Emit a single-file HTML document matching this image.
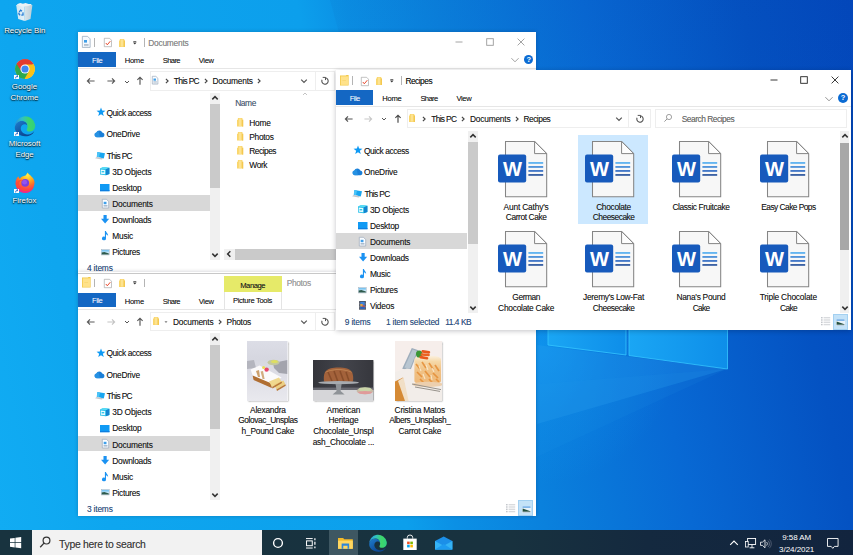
<!DOCTYPE html><html><head><meta charset="utf-8"><title>Desktop</title><style>
*{box-sizing:border-box;margin:0;padding:0}
html,body{width:853px;height:555px;overflow:hidden}
body{position:relative;font-family:"Liberation Sans",sans-serif;font-size:8.4px;color:#1a1a1a;background:#0a84dc}
.a{position:absolute}
.t{position:absolute;white-space:nowrap;line-height:10px;text-shadow:0 0 .6px rgba(20,20,20,.4)}
.c{text-align:center}
.win{position:absolute;overflow:hidden;background:#fff}
.in{position:absolute}
.sh{position:absolute;box-shadow:0 1px 5px 0 rgba(0,0,20,.24)}
.file{position:absolute;background:#1568c3;color:#fff;text-align:center;line-height:15px}
.st{color:#2b5289}
.g{color:#8c8c8c}
.box{position:absolute;border:1px solid #eeeeee;background:#fff}
.dl{color:#fff;text-shadow:0 .7px 1.2px rgba(0,0,0,.95),0 0 2px rgba(0,0,0,.55);font-size:7.8px;line-height:10.9px;text-align:center;position:absolute;width:70px}
.lab{position:absolute;text-align:center;line-height:10.7px;font-size:8.4px;letter-spacing:-.22px;text-shadow:0 0 .6px rgba(20,20,20,.4)}
svg{position:absolute;overflow:visible}
</style></head><body><svg style="left:0px;top:0px" width="853" height="555" viewBox="0 0 853 555"><defs><linearGradient id="bgg" gradientUnits="userSpaceOnUse" x1="-107.6" y1="22.7" x2="831.3" y2="-175.1"><stop offset="0.0000" stop-color="#11acf3"/><stop offset="0.1146" stop-color="#0ea6ef"/><stop offset="0.4167" stop-color="#0c9fec"/><stop offset="0.4667" stop-color="#0b90e5"/><stop offset="0.5573" stop-color="#0a81dd"/><stop offset="0.7083" stop-color="#0869d4"/><stop offset="0.8698" stop-color="#0452c2"/><stop offset="1.0000" stop-color="#0347bc"/></linearGradient><linearGradient id="pane" x1="0" y1="0" x2="1" y2="0"><stop offset="0" stop-color="#1aa6f4"/><stop offset="1" stop-color="#0e8ee9"/></linearGradient></defs><rect x="0" y="0" width="853" height="555" fill="url(#bgg)"/><defs><linearGradient id="dk" x1="0" y1="0" x2="0" y2="1"><stop offset="0" stop-color="#001a70" stop-opacity=".04"/><stop offset="1" stop-color="#001a70" stop-opacity="0"/></linearGradient></defs><polygon points="330,0 853,0 853,330 420,330" fill="url(#dk)"/><defs><radialGradient id="glow" gradientUnits="userSpaceOnUse" cx="540" cy="345" r="140"><stop offset="0" stop-color="#12a4fa" stop-opacity=".55"/><stop offset=".5" stop-color="#12a4fa" stop-opacity=".2"/><stop offset="1" stop-color="#12a4fa" stop-opacity="0"/></radialGradient></defs><rect x="380" y="200" width="320" height="300" fill="url(#glow)"/><polygon points="727,369 537,345 537,424" fill="#2aa0f0" opacity=".28"/><polygon points="727,369 400,395 400,520" fill="#2aa0f0" opacity=".10"/><polygon points="548,320 626,320 626,355 548,345" fill="url(#pane)" stroke="#35c6ff" stroke-width=".8"/><polygon points="629,320 727.5,320 727.5,369 629,355.5" fill="url(#pane)" stroke="#35c6ff" stroke-width=".8"/></svg>
<div class="a" style="left:78px;top:32.4px;width:458.4px;height:242.6px;box-shadow:0 0 4px rgba(0,0,30,.22)"></div>
<div class="win" style="left:78px;top:32.4px;width:458.4px;height:242.6px"><div class="in" style="left:-78px;top:-32.4px;width:853px;height:555px">
<svg style="left:82px;top:36.2px" width="8.5" height="11.8" viewBox="0 0 8.5 11.8"><path d="M.35 .35 H5.6 L8.15 2.9 V11.45 H.35Z" fill="#f4f9fe" stroke="#8fa3b8" stroke-width=".7"/><rect x="2" y="4" width="3" height="2.6" fill="#3f9fe8"/><rect x="2" y="8" width="4.6" height=".7" fill="#9ab"/><rect x="2" y="9.4" width="4.6" height=".7" fill="#9ab"/></svg>
<div class="a" style="left:94.3px;top:38.25px;width:0.8px;height:8.5px;background:#b4b4b4;"></div>
<svg style="left:103.6px;top:38.2px" width="7.8" height="9" viewBox="0 0 7.8 9"><path d="M.3 .3 H5.6 L7.5 2.2 V8.7 H.3Z" fill="#fff" stroke="#9a9a9a" stroke-width=".6"/><path d="M1.8 5 L3.3 6.8 L6.3 3.2" fill="none" stroke="#e8482c" stroke-width="1"/></svg>
<svg style="left:118.8px;top:38.6px" width="6" height="8" viewBox="0 0 6 8"><path d="M0.8400000000000001 0 H5.28 V1.6 H6 V8 H0 V1.6 H0.8400000000000001Z" fill="#fad66c"/><path d="M1.7999999999999998 0.48 H4.199999999999999 V7.52 H1.7999999999999998Z" fill="#fde79d" opacity=".75"/><path d="M4.800000000000001 1.6 H6 V8 H4.800000000000001Z" fill="#f3c44a" opacity=".8"/></svg>
<svg style="left:133.2px;top:40.6px" width="3.6" height="3.6" viewBox="0 0 3.6 3.6"><rect x=".3" y="0" width="3" height=".7" fill="#333"/><polygon points="0,1.4 3.6,1.4 1.8,3.4" fill="#333"/></svg>
<div class="a" style="left:144.0px;top:38.25px;width:0.8px;height:8.5px;background:#b4b4b4;"></div>
<div class="t g" style="left:148.2px;top:37.6px;letter-spacing:-0.221px;">Documents</div>
<svg style="left:459.2px;top:42px" width="1" height="1" viewBox="0 0 1 1"><path d="M-3.5 0 H3.5" stroke="#9a9a9a" stroke-width=".9"/></svg>
<svg style="left:489.5px;top:42px" width="1" height="1" viewBox="0 0 1 1"><rect x="-3.3" y="-3.3" width="6.6" height="6.6" fill="none" stroke="#9a9a9a" stroke-width=".9"/></svg>
<svg style="left:520.6px;top:42px" width="1" height="1" viewBox="0 0 1 1"><path d="M-3.4 -3.4 L3.4 3.4 M3.4 -3.4 L-3.4 3.4" stroke="#9a9a9a" stroke-width=".9"/></svg>
<svg style="left:514.5px;top:60.3px" width="1" height="1" viewBox="0 0 1 1"><path d="M-3.6 -1.8 L0 1.8 L3.6 -1.8" fill="none" stroke="#8a8a8a" stroke-width="0.8"/></svg>
<div class="a" style="left:524.3px;top:55.199999999999996px;width:9.2px;height:9.2px;border-radius:5px;background:#0b6bd3;color:#fff;font-size:7.5px;font-weight:bold;line-height:9.4px;text-align:center">?</div>
<div class="a" style="left:78px;top:52px;width:37.7px;height:14.8px;background:#1467c3;"></div>
<div class="t " style="left:92.1px;top:55.7px;font-size:7.6px;letter-spacing:-0.562px;color:#fff;text-shadow:none">File</div>
<div class="t " style="left:124.7px;top:55.9px;font-size:7.6px;letter-spacing:-0.268px;">Home</div>
<div class="t " style="left:162.8px;top:55.9px;font-size:7.6px;letter-spacing:-0.616px;">Share</div>
<div class="t " style="left:198.8px;top:55.9px;font-size:7.6px;letter-spacing:-0.359px;">View</div>
<div class="a" style="left:78px;top:68.3px;width:460px;height:0.9px;background:#e6e6e6;"></div>
<svg style="left:91.3px;top:81.2px" width="1" height="1" viewBox="0 0 1 1"><path d="M3.6 0 H-3.6 M-1.0 -2.6 L-3.6 0 L-1.0 2.6" fill="none" stroke="#5a5a5a" stroke-width="1.15"/></svg>
<svg style="left:110.8px;top:81.2px" width="1" height="1" viewBox="0 0 1 1"><path d="M-3.6 0 H3.6 M1.0 -2.6 L3.6 0 L1.0 2.6" fill="none" stroke="#5a5a5a" stroke-width="1.15"/></svg>
<svg style="left:127px;top:81.6px" width="1" height="1" viewBox="0 0 1 1"><path d="M-2 -1.0 L0 1.0 L2 -1.0" fill="none" stroke="#555" stroke-width="1"/></svg>
<svg style="left:140.3px;top:81px" width="1" height="1" viewBox="0 0 1 1"><path d="M0 3.8 V-3.8 M-2.6 -1.1999999999999997 L0 -3.8 L2.6 -1.1999999999999997" fill="none" stroke="#555" stroke-width="1.15"/></svg>
<div class="box" style="left:149.6px;top:71px;width:166px;height:19.8px"></div>
<div class="box" style="left:314.8px;top:71px;width:20px;height:19.8px"></div>
<svg style="left:152.4px;top:76.4px" width="6.2" height="8.4" viewBox="0 0 6.2 8.4"><path d="M.3 .3 H3.844 L5.9 2.2680000000000002 V8.1 H.3Z" fill="#fbfdff" stroke="#93a3b6" stroke-width=".65"/><rect x="1.488" y="2.52" width="2.4800000000000004" height="2.184" fill="#3f9fe9"/><rect x="1.364" y="5.5440000000000005" width="3.4720000000000004" height=".7" fill="#8aa0b8"/><rect x="1.364" y="6.720000000000001" width="3.4720000000000004" height=".6" fill="#a9b8c8"/></svg>
<svg style="left:166.5px;top:81.3px" width="1" height="1" viewBox="0 0 1 1"><path d="M-1.1 -2.2 L1.1 0 L-1.1 2.2" fill="none" stroke="#444" stroke-width="1.15"/></svg>
<div class="t " style="left:173.8px;top:75.9px;letter-spacing:-0.653px;">This PC</div>
<svg style="left:206px;top:81.3px" width="1" height="1" viewBox="0 0 1 1"><path d="M-1.1 -2.2 L1.1 0 L-1.1 2.2" fill="none" stroke="#444" stroke-width="1.15"/></svg>
<div class="t " style="left:212.4px;top:75.9px;letter-spacing:-0.221px;">Documents</div>
<svg style="left:259.2px;top:81.3px" width="1" height="1" viewBox="0 0 1 1"><path d="M-1.1 -2.2 L1.1 0 L-1.1 2.2" fill="none" stroke="#444" stroke-width="1.15"/></svg>
<svg style="left:304.2px;top:81.3px" width="1" height="1" viewBox="0 0 1 1"><path d="M-2.8 -1.4 L0 1.4 L2.8 -1.4" fill="none" stroke="#555" stroke-width="1.2"/></svg>
<svg style="left:324.8px;top:81px" width="1" height="1" viewBox="0 0 1 1"><path d="M0.3 -3.2 A3.2 3.2 0 1 1 -2.95 -1.3" fill="none" stroke="#555" stroke-width="1.1"/><path d="M-2.3 -3.6 H0.5 V-.9" fill="none" stroke="#555" stroke-width="1"/></svg>
<div class="a" style="left:78px;top:195px;width:131.5px;height:15.7px;background:#d8d8d8;"></div>
<div class="t " style="left:106.4px;top:107.8px;letter-spacing:-0.412px;">Quick access</div>
<div class="t " style="left:106.4px;top:129.0px;letter-spacing:-0.247px;">OneDrive</div>
<div class="t " style="left:106.8px;top:150.6px;letter-spacing:-0.653px;">This PC</div>
<div class="t " style="left:112.3px;top:166.7px;letter-spacing:-0.235px;">3D Objects</div>
<div class="t " style="left:112.3px;top:182.8px;letter-spacing:-0.231px;">Desktop</div>
<div class="t " style="left:112.3px;top:198.9px;letter-spacing:-0.221px;">Documents</div>
<div class="t " style="left:112.3px;top:215.0px;letter-spacing:-0.284px;">Downloads</div>
<div class="t " style="left:112.3px;top:231.1px;letter-spacing:-0.247px;">Music</div>
<div class="t " style="left:112.3px;top:247.2px;letter-spacing:-0.331px;">Pictures</div>
<svg style="left:96.8px;top:108.4px" width="8" height="8" viewBox="0 0 8 8"><polygon points="4.00,-0.50 5.15,2.62 8.47,2.75 5.85,4.80 6.76,8.00 4.00,6.15 1.24,8.00 2.15,4.80 -0.47,2.75 2.85,2.62" fill="#0f9af4"/></svg>
<svg style="left:94px;top:130.2px" width="11" height="7.3" viewBox="0 0 11 7.3"><path d="M2.6 7.3 A2.4 2.4 0 0 1 2.3 2.6 A3.3 3.3 0 0 1 8.3 2.4 A2.5 2.5 0 0 1 8.6 7.3 Z" fill="#1a7fd8"/><path d="M2.6 7.3 A2.4 2.4 0 0 1 2.3 2.6 A3.3 3.3 0 0 1 4.5 0.9 L6 7.3Z" fill="#2b98e8" opacity=".7"/></svg>
<svg style="left:94.5px;top:151.6px" width="10" height="7.4" viewBox="0 0 10 7.4"><polygon points="2.4,0 10,1.2 8.8,6.4 1.8,4.8" fill="#18a6f0"/><polygon points="2.4,0 5,0.4 4,5.3 1.8,4.8" fill="#4cc4f8"/><polygon points="0,6.2 1.9,4.9 8.6,6.4 6.6,7.4" fill="#c2c6cc"/></svg>
<svg style="left:100.3px;top:167.1px" width="9.4" height="8.3" viewBox="0 0 9.4 8.3"><polygon points="0,1.5 3.4,0 9.4,0.7 9.4,7 5.9,8.3 0,7.4" fill="#22bde8"/><polygon points="0,1.5 3.4,0 9.4,0.7 5.9,2.2" fill="#5adcf6"/><polygon points="5.9,2.2 9.4,0.7 9.4,7 5.9,8.3" fill="#1384cf"/><polygon points="0.7,2.4 5.2,2.9 5.2,7.3 0.7,6.7" fill="#e9fbff"/><rect x="1.6" y="4" width="2.6" height="1.4" fill="#35c6ea"/></svg>
<svg style="left:100.3px;top:183.9px" width="9.4" height="6.6" viewBox="0 0 9.4 6.6"><rect x="0" y="0" width="9.5" height="7.2" fill="#109af4"/><rect x="0" y="6" width="9.5" height="1.2" fill="#0e7fe0"/></svg>
<svg style="left:101.6px;top:198.8px" width="7" height="9.3" viewBox="0 0 7 9.3"><path d="M.3 .3 H4.34 L6.7 2.5110000000000006 V9.0 H.3Z" fill="#fbfdff" stroke="#93a3b6" stroke-width=".65"/><rect x="1.68" y="2.79" width="2.8000000000000003" height="2.418" fill="#3f9fe9"/><rect x="1.54" y="6.138000000000001" width="3.9200000000000004" height=".7" fill="#8aa0b8"/><rect x="1.54" y="7.440000000000001" width="3.9200000000000004" height=".6" fill="#a9b8c8"/></svg>
<svg style="left:101px;top:215.4px" width="8.2" height="8.4" viewBox="0 0 8.2 8.4"><path d="M2.5 0 H5.7 V3.7 H8.2 L4.1 8.4 L0 3.7 H2.5Z" fill="#1b92f2"/></svg>
<svg style="left:102.2px;top:230.9px" width="6.3" height="9.5" viewBox="0 0 6.3 9.5"><path d="M2.9 0 H4 C4.2 1.9 6.5 2.6 6.1 5.2 C5.7 3.7 4.4 3.4 4 3.2 V7.4 A2 1.9 0 1 1 2.9 5.7Z" fill="#1b92f2"/></svg>
<svg style="left:100.8px;top:248.8px" width="8.6" height="6.2" viewBox="0 0 8.6 6.2"><rect x=".2" y=".2" width="8.2" height="5.8" fill="#e4f2fb" stroke="#9aa6b2" stroke-width=".4"/><rect x=".7" y=".9" width="7.2" height="2.4" fill="#7cc4f0"/><rect x=".7" y="2.5" width="7.2" height="1" fill="#bfe3f7"/><path d="M.7 5.4 V3.4 L3.4 3 L7.9 4.6 V5.4Z" fill="#2e5a4c"/></svg>
<div class="a" style="left:210.1px;top:92.6px;width:10.2px;height:167.2px;background:#f0f0f0;"></div>
<div class="a" style="left:210.1px;top:104.4px;width:10.2px;height:83.6px;background:#cacaca;"></div>
<svg style="left:215.2px;top:98.0px" width="1" height="1" viewBox="0 0 1 1"><path d="M-2.7 1.35 L0 -1.35 L2.7 1.35" fill="none" stroke="#333" stroke-width="1.5"/></svg>
<svg style="left:215.2px;top:254.6px" width="1" height="1" viewBox="0 0 1 1"><path d="M-2.7 -1.35 L0 1.35 L2.7 -1.35" fill="none" stroke="#333" stroke-width="1.5"/></svg>
<div class="t " style="left:235.2px;top:97.8px;letter-spacing:-0.402px;color:#4c607a">Name</div>
<svg style="left:305px;top:94.3px" width="1" height="1" viewBox="0 0 1 1"><path d="M-2 1.0 L0 -1.0 L2 1.0" fill="none" stroke="#aaa" stroke-width="0.7"/></svg>
<svg style="left:237.2px;top:118.0px" width="6.2" height="8.6" viewBox="0 0 6.2 8.6"><path d="M0.8680000000000001 0 H5.456 V1.72 H6.2 V8.6 H0 V1.72 H0.8680000000000001Z" fill="#fad66c"/><path d="M1.8599999999999999 0.516 H4.34 V8.084 H1.8599999999999999Z" fill="#fde79d" opacity=".75"/><path d="M4.960000000000001 1.72 H6.2 V8.6 H4.960000000000001Z" fill="#f3c44a" opacity=".8"/></svg>
<div class="t " style="left:249.3px;top:117.7px;letter-spacing:-0.252px;">Home</div>
<svg style="left:237.2px;top:132.15px" width="6.2" height="8.6" viewBox="0 0 6.2 8.6"><path d="M0.8680000000000001 0 H5.456 V1.72 H6.2 V8.6 H0 V1.72 H0.8680000000000001Z" fill="#fad66c"/><path d="M1.8599999999999999 0.516 H4.34 V8.084 H1.8599999999999999Z" fill="#fde79d" opacity=".75"/><path d="M4.960000000000001 1.72 H6.2 V8.6 H4.960000000000001Z" fill="#f3c44a" opacity=".8"/></svg>
<div class="t " style="left:249.3px;top:131.85px;letter-spacing:-0.292px;">Photos</div>
<svg style="left:237.2px;top:146.3px" width="6.2" height="8.6" viewBox="0 0 6.2 8.6"><path d="M0.8680000000000001 0 H5.456 V1.72 H6.2 V8.6 H0 V1.72 H0.8680000000000001Z" fill="#fad66c"/><path d="M1.8599999999999999 0.516 H4.34 V8.084 H1.8599999999999999Z" fill="#fde79d" opacity=".75"/><path d="M4.960000000000001 1.72 H6.2 V8.6 H4.960000000000001Z" fill="#f3c44a" opacity=".8"/></svg>
<div class="t " style="left:249.3px;top:146.0px;letter-spacing:-0.507px;">Recipes</div>
<svg style="left:237.2px;top:160.45px" width="6.2" height="8.6" viewBox="0 0 6.2 8.6"><path d="M0.8680000000000001 0 H5.456 V1.72 H6.2 V8.6 H0 V1.72 H0.8680000000000001Z" fill="#fad66c"/><path d="M1.8599999999999999 0.516 H4.34 V8.084 H1.8599999999999999Z" fill="#fde79d" opacity=".75"/><path d="M4.960000000000001 1.72 H6.2 V8.6 H4.960000000000001Z" fill="#f3c44a" opacity=".8"/></svg>
<div class="t " style="left:249.3px;top:160.15px;letter-spacing:-0.387px;">Work</div>
<div class="a" style="left:223.8px;top:249.2px;width:320px;height:10.4px;background:#f0f0f0;"></div>
<div class="a" style="left:234.8px;top:249.2px;width:300px;height:10.4px;background:#cacaca;"></div>
<svg style="left:229.2px;top:254.4px" width="1" height="1" viewBox="0 0 1 1"><path d="M1.35 -2.7 L-1.35 0 L1.35 2.7" fill="none" stroke="#333" stroke-width="1.5"/></svg>
<div class="t st" style="left:87px;top:263.0px;letter-spacing:-0.196px;">4 items</div>
</div></div>
<div class="a" style="left:78px;top:272.4px;width:458.4px;height:243.8px;box-shadow:0 0 4px rgba(0,0,30,.22)"></div>
<div class="win" style="left:78px;top:272.4px;width:458.4px;height:243.8px"><div class="in" style="left:-78px;top:-272.4px;width:853px;height:555px">
<div class="a" style="left:78px;top:272.6px;width:460px;height:0.8px;background:#c8c8c8;"></div>
<svg style="left:82px;top:277.2px" width="8.6" height="10.6" viewBox="0 0 8.6 10.6"><path d="M0 .5 H5.8 L6.6 0 H8.6 V10.6 H0Z" fill="#f2c744"/><path d="M.7 1.3 H8 V9.9 H.7Z" fill="#ffe28a"/><path d="M2.4 5 H6 V5.6 H2.4Z" fill="#f6d369"/></svg>
<div class="a" style="left:94.3px;top:278.85px;width:0.8px;height:8.5px;background:#b4b4b4;"></div>
<svg style="left:103.6px;top:278.8px" width="7.8" height="9" viewBox="0 0 7.8 9"><path d="M.3 .3 H5.6 L7.5 2.2 V8.7 H.3Z" fill="#fff" stroke="#9a9a9a" stroke-width=".6"/><path d="M1.8 5 L3.3 6.8 L6.3 3.2" fill="none" stroke="#e8482c" stroke-width="1"/></svg>
<svg style="left:118.8px;top:279.2px" width="6" height="8" viewBox="0 0 6 8"><path d="M0.8400000000000001 0 H5.28 V1.6 H6 V8 H0 V1.6 H0.8400000000000001Z" fill="#fad66c"/><path d="M1.7999999999999998 0.48 H4.199999999999999 V7.52 H1.7999999999999998Z" fill="#fde79d" opacity=".75"/><path d="M4.800000000000001 1.6 H6 V8 H4.800000000000001Z" fill="#f3c44a" opacity=".8"/></svg>
<svg style="left:133.2px;top:281.2px" width="3.6" height="3.6" viewBox="0 0 3.6 3.6"><rect x=".3" y="0" width="3" height=".7" fill="#333"/><polygon points="0,1.4 3.6,1.4 1.8,3.4" fill="#333"/></svg>
<div class="a" style="left:144.0px;top:278.85px;width:0.8px;height:8.5px;background:#b4b4b4;"></div>
<div class="a" style="left:223.8px;top:276.2px;width:57.8px;height:15.8px;background:#e6ea69;"></div>
<div class="t " style="left:240.2px;top:280.5px;font-size:7.6px;letter-spacing:-0.411px;">Manage</div>
<div class="t g" style="left:286.8px;top:278.1px;letter-spacing:-0.359px;color:#a2a2a2">Photos</div>
<div class="a" style="left:78px;top:292.6px;width:37.7px;height:14.8px;background:#1467c3;"></div>
<div class="t " style="left:92.1px;top:296.3px;font-size:7.6px;letter-spacing:-0.562px;color:#fff;text-shadow:none">File</div>
<div class="t " style="left:124.7px;top:296.5px;font-size:7.6px;letter-spacing:-0.268px;">Home</div>
<div class="t " style="left:162.8px;top:296.5px;font-size:7.6px;letter-spacing:-0.616px;">Share</div>
<div class="t " style="left:198.8px;top:296.5px;font-size:7.6px;letter-spacing:-0.359px;">View</div>
<div class="t " style="left:233px;top:296.3px;font-size:7.6px;letter-spacing:-0.336px;">Picture Tools</div>
<div class="a" style="left:223.8px;top:292px;width:0.7px;height:16.6px;background:#e4e4e4;"></div>
<div class="a" style="left:281px;top:292px;width:0.7px;height:16.6px;background:#e4e4e4;"></div>
<div class="a" style="left:78px;top:308.9px;width:460px;height:0.9px;background:#e6e6e6;"></div>
<svg style="left:91.3px;top:321.8px" width="1" height="1" viewBox="0 0 1 1"><path d="M3.6 0 H-3.6 M-1.0 -2.6 L-3.6 0 L-1.0 2.6" fill="none" stroke="#5a5a5a" stroke-width="1.15"/></svg>
<svg style="left:110.8px;top:321.8px" width="1" height="1" viewBox="0 0 1 1"><path d="M-3.6 0 H3.6 M1.0 -2.6 L3.6 0 L1.0 2.6" fill="none" stroke="#c4c4c4" stroke-width="1.15"/></svg>
<svg style="left:127px;top:322.2px" width="1" height="1" viewBox="0 0 1 1"><path d="M-2 -1.0 L0 1.0 L2 -1.0" fill="none" stroke="#555" stroke-width="1"/></svg>
<svg style="left:140.3px;top:321.6px" width="1" height="1" viewBox="0 0 1 1"><path d="M0 3.8 V-3.8 M-2.6 -1.1999999999999997 L0 -3.8 L2.6 -1.1999999999999997" fill="none" stroke="#555" stroke-width="1.15"/></svg>
<div class="box" style="left:149.6px;top:311.6px;width:166px;height:19.8px"></div>
<div class="box" style="left:314.8px;top:311.6px;width:20px;height:19.8px"></div>
<svg style="left:152.6px;top:317.4px" width="6" height="8" viewBox="0 0 6 8"><path d="M0.8400000000000001 0 H5.28 V1.6 H6 V8 H0 V1.6 H0.8400000000000001Z" fill="#fad66c"/><path d="M1.7999999999999998 0.48 H4.199999999999999 V7.52 H1.7999999999999998Z" fill="#fde79d" opacity=".75"/><path d="M4.800000000000001 1.6 H6 V8 H4.800000000000001Z" fill="#f3c44a" opacity=".8"/></svg>
<svg style="left:166px;top:321.6px" width="1" height="1" viewBox="0 0 1 1"><polygon points="-1.5,-.8 1.5,-.8 0,.9" fill="#777"/></svg>
<div class="t " style="left:173px;top:316.5px;letter-spacing:-0.221px;">Documents</div>
<svg style="left:219.6px;top:321.9px" width="1" height="1" viewBox="0 0 1 1"><path d="M-1.1 -2.2 L1.1 0 L-1.1 2.2" fill="none" stroke="#444" stroke-width="1.15"/></svg>
<div class="t " style="left:226.6px;top:316.5px;letter-spacing:-0.292px;">Photos</div>
<svg style="left:304.2px;top:321.9px" width="1" height="1" viewBox="0 0 1 1"><path d="M-2.8 -1.4 L0 1.4 L2.8 -1.4" fill="none" stroke="#555" stroke-width="1.2"/></svg>
<svg style="left:324.8px;top:321.6px" width="1" height="1" viewBox="0 0 1 1"><path d="M0.3 -3.2 A3.2 3.2 0 1 1 -2.95 -1.3" fill="none" stroke="#555" stroke-width="1.1"/><path d="M-2.3 -3.6 H0.5 V-.9" fill="none" stroke="#555" stroke-width="1"/></svg>
<div class="a" style="left:78px;top:435.6px;width:131.5px;height:15.7px;background:#d8d8d8;"></div>
<div class="t " style="left:106.4px;top:348.4px;letter-spacing:-0.412px;">Quick access</div>
<div class="t " style="left:106.4px;top:369.6px;letter-spacing:-0.247px;">OneDrive</div>
<div class="t " style="left:106.8px;top:391.2px;letter-spacing:-0.653px;">This PC</div>
<div class="t " style="left:112.3px;top:407.3px;letter-spacing:-0.235px;">3D Objects</div>
<div class="t " style="left:112.3px;top:423.4px;letter-spacing:-0.231px;">Desktop</div>
<div class="t " style="left:112.3px;top:439.5px;letter-spacing:-0.221px;">Documents</div>
<div class="t " style="left:112.3px;top:455.6px;letter-spacing:-0.284px;">Downloads</div>
<div class="t " style="left:112.3px;top:471.7px;letter-spacing:-0.247px;">Music</div>
<div class="t " style="left:112.3px;top:487.8px;letter-spacing:-0.331px;">Pictures</div>
<svg style="left:96.8px;top:349.0px" width="8" height="8" viewBox="0 0 8 8"><polygon points="4.00,-0.50 5.15,2.62 8.47,2.75 5.85,4.80 6.76,8.00 4.00,6.15 1.24,8.00 2.15,4.80 -0.47,2.75 2.85,2.62" fill="#0f9af4"/></svg>
<svg style="left:94px;top:370.8px" width="11" height="7.3" viewBox="0 0 11 7.3"><path d="M2.6 7.3 A2.4 2.4 0 0 1 2.3 2.6 A3.3 3.3 0 0 1 8.3 2.4 A2.5 2.5 0 0 1 8.6 7.3 Z" fill="#1a7fd8"/><path d="M2.6 7.3 A2.4 2.4 0 0 1 2.3 2.6 A3.3 3.3 0 0 1 4.5 0.9 L6 7.3Z" fill="#2b98e8" opacity=".7"/></svg>
<svg style="left:94.5px;top:392.2px" width="10" height="7.4" viewBox="0 0 10 7.4"><polygon points="2.4,0 10,1.2 8.8,6.4 1.8,4.8" fill="#18a6f0"/><polygon points="2.4,0 5,0.4 4,5.3 1.8,4.8" fill="#4cc4f8"/><polygon points="0,6.2 1.9,4.9 8.6,6.4 6.6,7.4" fill="#c2c6cc"/></svg>
<svg style="left:100.3px;top:407.7px" width="9.4" height="8.3" viewBox="0 0 9.4 8.3"><polygon points="0,1.5 3.4,0 9.4,0.7 9.4,7 5.9,8.3 0,7.4" fill="#22bde8"/><polygon points="0,1.5 3.4,0 9.4,0.7 5.9,2.2" fill="#5adcf6"/><polygon points="5.9,2.2 9.4,0.7 9.4,7 5.9,8.3" fill="#1384cf"/><polygon points="0.7,2.4 5.2,2.9 5.2,7.3 0.7,6.7" fill="#e9fbff"/><rect x="1.6" y="4" width="2.6" height="1.4" fill="#35c6ea"/></svg>
<svg style="left:100.3px;top:424.5px" width="9.4" height="6.6" viewBox="0 0 9.4 6.6"><rect x="0" y="0" width="9.5" height="7.2" fill="#109af4"/><rect x="0" y="6" width="9.5" height="1.2" fill="#0e7fe0"/></svg>
<svg style="left:101.6px;top:439.4px" width="7" height="9.3" viewBox="0 0 7 9.3"><path d="M.3 .3 H4.34 L6.7 2.5110000000000006 V9.0 H.3Z" fill="#fbfdff" stroke="#93a3b6" stroke-width=".65"/><rect x="1.68" y="2.79" width="2.8000000000000003" height="2.418" fill="#3f9fe9"/><rect x="1.54" y="6.138000000000001" width="3.9200000000000004" height=".7" fill="#8aa0b8"/><rect x="1.54" y="7.440000000000001" width="3.9200000000000004" height=".6" fill="#a9b8c8"/></svg>
<svg style="left:101px;top:456.0px" width="8.2" height="8.4" viewBox="0 0 8.2 8.4"><path d="M2.5 0 H5.7 V3.7 H8.2 L4.1 8.4 L0 3.7 H2.5Z" fill="#1b92f2"/></svg>
<svg style="left:102.2px;top:471.5px" width="6.3" height="9.5" viewBox="0 0 6.3 9.5"><path d="M2.9 0 H4 C4.2 1.9 6.5 2.6 6.1 5.2 C5.7 3.7 4.4 3.4 4 3.2 V7.4 A2 1.9 0 1 1 2.9 5.7Z" fill="#1b92f2"/></svg>
<svg style="left:100.8px;top:489.4px" width="8.6" height="6.2" viewBox="0 0 8.6 6.2"><rect x=".2" y=".2" width="8.2" height="5.8" fill="#e4f2fb" stroke="#9aa6b2" stroke-width=".4"/><rect x=".7" y=".9" width="7.2" height="2.4" fill="#7cc4f0"/><rect x=".7" y="2.5" width="7.2" height="1" fill="#bfe3f7"/><path d="M.7 5.4 V3.4 L3.4 3 L7.9 4.6 V5.4Z" fill="#2e5a4c"/></svg>
<div class="a" style="left:210.1px;top:333.2px;width:10.2px;height:167.2px;background:#f0f0f0;"></div>
<div class="a" style="left:210.1px;top:345.0px;width:10.2px;height:83.6px;background:#cacaca;"></div>
<svg style="left:215.2px;top:338.6px" width="1" height="1" viewBox="0 0 1 1"><path d="M-2.7 1.35 L0 -1.35 L2.7 1.35" fill="none" stroke="#333" stroke-width="1.5"/></svg>
<svg style="left:215.2px;top:495.2px" width="1" height="1" viewBox="0 0 1 1"><path d="M-2.7 -1.35 L0 1.35 L2.7 -1.35" fill="none" stroke="#333" stroke-width="1.5"/></svg>
<div class="a" style="left:247.4px;top:340.7px;width:40.5px;height:60px;box-shadow:.6px .8px 1.6px rgba(0,0,0,.4)"></div>
<svg style="left:247.4px;top:340.7px" width="40.5" height="60" viewBox="0 0 40.5 60"><defs><filter id="bl" x="-5%" y="-5%" width="110%" height="110%"><feGaussianBlur stdDeviation=".55"/></filter><filter id="bl2" x="-5%" y="-5%" width="110%" height="110%"><feGaussianBlur stdDeviation=".9"/></filter><linearGradient id="p1" x1="0" y1="0" x2="0" y2="1"><stop offset="0" stop-color="#dcdde6"/><stop offset=".3" stop-color="#d6d7e0"/><stop offset=".6" stop-color="#dedee6"/><stop offset="1" stop-color="#e9e9ee"/></linearGradient><clipPath id="c1"><rect width="40.5" height="60"/></clipPath></defs><rect width="40.5" height="60" fill="url(#p1)"/><g clip-path="url(#c1)"><g filter="url(#bl)"><polygon points="26,22 40.5,19 40.5,33 32,32 27,27" fill="#a3a4ad"/><polygon points="0,20 7,19 9,27 0,28" fill="#b4b5be"/><ellipse cx="26.5" cy="21.5" rx="6" ry="2.8" fill="#c4c8a0"/><ellipse cx="27.5" cy="20.6" rx="3.4" ry="1.7" fill="#dede62"/><polygon points="3.6,28.6 12.6,24.4 34.6,36.6 25,43 6,35.4" fill="#fbfafb"/><polygon points="5.6,34.6 24.6,42.6 24.8,47 6.6,39" fill="#b06e30"/><polygon points="22,40.6 32,36.6 34.6,40.4 25,46" fill="#f0d88e"/><polygon points="27,43.4 36.4,39.6 38.4,43.2 29.4,48.6" fill="#ecd083"/><polygon points="25,46 34.6,40.4 35,42 25.6,47.6" fill="#b9793a"/><polygon points="29.4,48.6 38.4,43.2 38.8,44.8 30,50" fill="#b9793a"/><circle cx="19.6" cy="28.6" r="2.2" fill="#e8486a"/><circle cx="16.6" cy="26.6" r="1.5" fill="#eadb5a"/><polygon points="9,30 12,29 13,36 11,36" fill="#c08a4a" opacity=".8"/><polygon points="13.6,30.6 16,30 17.6,38 15.6,38" fill="#c08a4a" opacity=".7"/></g></g></svg>
<div class="a" style="left:313px;top:360.4px;width:60.4px;height:40.2px;box-shadow:.6px .8px 1.6px rgba(0,0,0,.4)"></div>
<svg style="left:313px;top:360.4px" width="60.4" height="40.2" viewBox="0 0 60.4 40.2"><defs><clipPath id="c2"><rect width="60.4" height="40.2"/></clipPath><linearGradient id="p2b" x1="0" y1="0" x2="1" y2="0"><stop offset="0" stop-color="#34353b"/><stop offset=".5" stop-color="#43444b"/><stop offset="1" stop-color="#36373d"/></linearGradient></defs><rect width="60.4" height="40.2" fill="url(#p2b)"/><g clip-path="url(#c2)"><g filter="url(#bl)"><rect x="-2" y="29.6" width="65" height="12" fill="#d6d6d9"/><rect x="-2" y="27.6" width="65" height="2.4" fill="#6a6b72"/><path d="M11 21.6 C10 11 13 7.6 25.6 7.4 C38 7.6 41 11 40 21.6 C33 24 18 24 11 21.6Z" fill="#a3623a"/><path d="M12 13 C17 9 34 9 39 13 C36 8 15 8 12 13Z" fill="#c48a58"/><path d="M15 12 L19 21 M21 11 L25 22 M27 11 L31 22 M33 12 L36 21" stroke="#7e4526" stroke-width="1.6" opacity=".7"/><ellipse cx="25.6" cy="22.6" rx="20.4" ry="1.7" fill="#a7abb0"/><path d="M22.6 24 H28.6 L27.6 31 L31.6 34.4 H19.6 L23.6 31Z" fill="#8f9398"/><ellipse cx="52" cy="31" rx="8.4" ry="3.2" fill="#c9b9a6"/><ellipse cx="52" cy="29.4" rx="6.6" ry="2.2" fill="#c9d4a8"/><ellipse cx="52" cy="32.6" rx="7" ry="1.6" fill="#e09a9a"/></g></g></svg>
<div class="a" style="left:395.3px;top:340.7px;width:47px;height:60px;box-shadow:.6px .8px 1.6px rgba(0,0,0,.4)"></div>
<svg style="left:395.3px;top:340.7px" width="47" height="60" viewBox="0 0 47 60"><defs><clipPath id="c3"><rect width="47" height="60"/></clipPath><linearGradient id="p3c" x1="0" y1="0" x2="0" y2="1"><stop offset="0" stop-color="#fbf1e2"/><stop offset=".2" stop-color="#f6d9a8"/><stop offset=".5" stop-color="#f0c286"/><stop offset="1" stop-color="#eeb878"/></linearGradient></defs><rect width="47" height="60" fill="#f6eeeb"/><g clip-path="url(#c3)"><g filter="url(#bl)"><polygon points="16.8,7 23.4,9.2 15.4,29.4 7.2,27.7" fill="#9eadbb"/><polygon points="17.6,8.6 22,10 15,27.6 9.4,26.6" fill="#b9c6d1"/><polygon points="0,31 12,27.6 47,33 47,60 0,60" fill="#f2ede9"/><polygon points="-1,41 8,36.6 12.6,60 -1,60" fill="#d58a35"/><polygon points="3,40 8.6,36.6 13.6,60 10,60" fill="#f1dfc6"/><path d="M19.4 18 C20 13.4 45 13.4 46 18 L46 40 C45 45.4 20 45.4 19.4 40Z" fill="url(#p3c)"/><path d="M21 23 L25 28 M27 21 L31 27 M34 22 L38 28 M40 24 L44 30 M22 31 L27 36 M30 30 L35 36 M38 32 L43 37 M25 38 L29 42 M34 38 L38 42.6 M41 38 L44 41" stroke="#e48a30" stroke-width="1.7" opacity=".8"/><path d="M24 25 L26 30 M31 24 L33 29 M37 27 L39 31 M28 33 L30 38 M36 34 L37 39" stroke="#fbefd8" stroke-width="1.1" opacity=".8"/><ellipse cx="32.6" cy="43.4" rx="15" ry="2.6" fill="#eccfae"/><path d="M17 43 L46 48.6 M20 46 L45 50.4" stroke="#97928b" stroke-width="1"/><ellipse cx="24.2" cy="13" rx="3.2" ry="3.6" fill="#3a9636"/><rect x="26.4" y="9.4" width="8.8" height="2.7" rx="1.2" fill="#e8581f" transform="rotate(8 30 11)"/><rect x="25.6" y="12.4" width="9.2" height="2.7" rx="1.2" fill="#ea6424" transform="rotate(4 30 14)"/><rect x="24.4" y="15.4" width="9" height="2.6" rx="1.2" fill="#e8581f" transform="rotate(10 29 16.6)"/></g></g></svg>
<div class="lab" style="left:227.89999999999998px;top:404.54999999999995px;width:80px">Alexandra<br><span style="letter-spacing:-.43px">Golovac_Unsplas</span><br>h_Pound Cake</div>
<div class="lab" style="left:303.4px;top:404.54999999999995px;width:80px">American<br>Heritage<br>Chocolate_Unspl<br>ash_Chocolate ...</div>
<div class="lab" style="left:379.8px;top:404.54999999999995px;width:80px">Cristina Matos<br><span style="letter-spacing:-.42px">Albers_Unsplash_</span><br>Carrot Cake</div>
<div class="t st" style="left:87px;top:503.6px;letter-spacing:-0.196px;">3 items</div>
<svg style="left:506.3px;top:504px" width="9.4" height="8.4" viewBox="0 0 9.4 8.4"><rect x="0" y="0.0" width="1.6" height="1.4" fill="#c4c7cc"/><rect x="2.6" y="0.0" width="6.6" height="1.4" fill="#d9dbde"/><rect x="0" y="2.3" width="1.6" height="1.4" fill="#c4c7cc"/><rect x="2.6" y="2.3" width="6.6" height="1.4" fill="#d9dbde"/><rect x="0" y="4.6" width="1.6" height="1.4" fill="#c4c7cc"/><rect x="2.6" y="4.6" width="6.6" height="1.4" fill="#d9dbde"/><rect x="0" y="6.8999999999999995" width="1.6" height="1.4" fill="#c4c7cc"/><rect x="2.6" y="6.8999999999999995" width="6.6" height="1.4" fill="#d9dbde"/></svg>
<div class="a" style="left:518.2px;top:500.2px;width:15px;height:15.9px;background:#c3e2f8;border:1px solid #a3d0f1"></div>
<svg style="left:521.6px;top:505.6px" width="9" height="6.6" viewBox="0 0 9 6.6"><rect x="0" y="0" width="9" height="6.6" fill="#e8f3fb"/><rect x=".4" y=".5" width="8.2" height="1.1" fill="#3f8fe0"/><path d="M.6 5.8 L.6 2.4 L8.4 5.2 L8.4 5.8Z" fill="#24503f"/><path d="M.6 5.8 H8.4 V6.4 H.6Z" fill="#9ab"/></svg>
</div></div>
<div class="sh" style="left:335.6px;top:70.2px;width:515px;height:259.6px"></div>
<div class="win" style="left:335.6px;top:70.2px;width:515px;height:259.6px"><div class="in" style="left:-335.6px;top:-70.2px;width:853px;height:555px">
<svg style="left:339.6px;top:74.6px" width="8.6" height="10.6" viewBox="0 0 8.6 10.6"><path d="M0 .5 H5.8 L6.6 0 H8.6 V10.6 H0Z" fill="#f2c744"/><path d="M.7 1.3 H8 V9.9 H.7Z" fill="#ffe28a"/><path d="M2.4 5 H6 V5.6 H2.4Z" fill="#f6d369"/></svg>
<div class="a" style="left:351.9px;top:76.35px;width:0.8px;height:8.5px;background:#b4b4b4;"></div>
<svg style="left:361.1px;top:76.6px" width="7.8" height="9" viewBox="0 0 7.8 9"><path d="M.3 .3 H5.6 L7.5 2.2 V8.7 H.3Z" fill="#fff" stroke="#9a9a9a" stroke-width=".6"/><path d="M1.8 5 L3.3 6.8 L6.3 3.2" fill="none" stroke="#e8482c" stroke-width="1"/></svg>
<svg style="left:376.2px;top:77px" width="6" height="8" viewBox="0 0 6 8"><path d="M0.8400000000000001 0 H5.28 V1.6 H6 V8 H0 V1.6 H0.8400000000000001Z" fill="#fad66c"/><path d="M1.7999999999999998 0.48 H4.199999999999999 V7.52 H1.7999999999999998Z" fill="#fde79d" opacity=".75"/><path d="M4.800000000000001 1.6 H6 V8 H4.800000000000001Z" fill="#f3c44a" opacity=".8"/></svg>
<svg style="left:390.4px;top:78.8px" width="3.6" height="3.6" viewBox="0 0 3.6 3.6"><rect x=".3" y="0" width="3" height=".7" fill="#333"/><polygon points="0,1.4 3.6,1.4 1.8,3.4" fill="#333"/></svg>
<div class="a" style="left:400.7px;top:76.35px;width:0.8px;height:8.5px;background:#b4b4b4;"></div>
<div class="t " style="left:405.4px;top:75.5px;letter-spacing:-0.507px;color:#111">Recipes</div>
<svg style="left:773.6px;top:79.5px" width="1" height="1" viewBox="0 0 1 1"><path d="M-3.5 0 H3.5" stroke="#222" stroke-width=".9"/></svg>
<svg style="left:803.5px;top:79.5px" width="1" height="1" viewBox="0 0 1 1"><rect x="-3.3" y="-3.3" width="6.6" height="6.6" fill="none" stroke="#222" stroke-width=".9"/></svg>
<svg style="left:834.8px;top:79.5px" width="1" height="1" viewBox="0 0 1 1"><path d="M-3.4 -3.4 L3.4 3.4 M3.4 -3.4 L-3.4 3.4" stroke="#222" stroke-width=".9"/></svg>
<svg style="left:828.5px;top:98.5px" width="1" height="1" viewBox="0 0 1 1"><path d="M-3.6 -1.8 L0 1.8 L3.6 -1.8" fill="none" stroke="#777" stroke-width="0.8"/></svg>
<div class="a" style="left:838.4px;top:93.4px;width:9.2px;height:9.2px;border-radius:5px;background:#0b6bd3;color:#fff;font-size:7.5px;font-weight:bold;line-height:9.4px;text-align:center">?</div>
<div class="a" style="left:335.6px;top:89.8px;width:37.7px;height:14.8px;background:#1467c3;"></div>
<div class="t " style="left:349.70000000000005px;top:93.5px;font-size:7.6px;letter-spacing:-0.562px;color:#fff;text-shadow:none">File</div>
<div class="t " style="left:382.3px;top:93.7px;font-size:7.6px;letter-spacing:-0.268px;">Home</div>
<div class="t " style="left:420.40000000000003px;top:93.7px;font-size:7.6px;letter-spacing:-0.616px;">Share</div>
<div class="t " style="left:456.40000000000003px;top:93.7px;font-size:7.6px;letter-spacing:-0.359px;">View</div>
<div class="a" style="left:335px;top:105.6px;width:520px;height:0.9px;background:#e6e6e6;"></div>
<svg style="left:349.1px;top:118.8px" width="1" height="1" viewBox="0 0 1 1"><path d="M3.6 0 H-3.6 M-1.0 -2.6 L-3.6 0 L-1.0 2.6" fill="none" stroke="#555" stroke-width="1.15"/></svg>
<svg style="left:367.9px;top:118.8px" width="1" height="1" viewBox="0 0 1 1"><path d="M-3.6 0 H3.6 M1.0 -2.6 L3.6 0 L1.0 2.6" fill="none" stroke="#c8c8c8" stroke-width="1.15"/></svg>
<svg style="left:384.3px;top:119.3px" width="1" height="1" viewBox="0 0 1 1"><path d="M-2 -1.0 L0 1.0 L2 -1.0" fill="none" stroke="#555" stroke-width="1"/></svg>
<svg style="left:398px;top:118.8px" width="1" height="1" viewBox="0 0 1 1"><path d="M0 3.8 V-3.8 M-2.6 -1.1999999999999997 L0 -3.8 L2.6 -1.1999999999999997" fill="none" stroke="#444" stroke-width="1.15"/></svg>
<div class="box" style="left:406.6px;top:108.6px;width:222px;height:19.8px"></div>
<div class="box" style="left:627.6px;top:108.6px;width:23px;height:19.8px"></div>
<div class="box" style="left:654.6px;top:108.6px;width:192.4px;height:19.8px"></div>
<svg style="left:409.4px;top:114.4px" width="6" height="8" viewBox="0 0 6 8"><path d="M0.8400000000000001 0 H5.28 V1.6 H6 V8 H0 V1.6 H0.8400000000000001Z" fill="#fad66c"/><path d="M1.7999999999999998 0.48 H4.199999999999999 V7.52 H1.7999999999999998Z" fill="#fde79d" opacity=".75"/><path d="M4.800000000000001 1.6 H6 V8 H4.800000000000001Z" fill="#f3c44a" opacity=".8"/></svg>
<svg style="left:423.7px;top:119px" width="1" height="1" viewBox="0 0 1 1"><path d="M-1.1 -2.2 L1.1 0 L-1.1 2.2" fill="none" stroke="#444" stroke-width="1.15"/></svg>
<div class="t " style="left:431.2px;top:113.7px;letter-spacing:-0.653px;">This PC</div>
<svg style="left:463px;top:119px" width="1" height="1" viewBox="0 0 1 1"><path d="M-1.1 -2.2 L1.1 0 L-1.1 2.2" fill="none" stroke="#444" stroke-width="1.15"/></svg>
<div class="t " style="left:470px;top:113.7px;letter-spacing:-0.221px;">Documents</div>
<svg style="left:517px;top:119px" width="1" height="1" viewBox="0 0 1 1"><path d="M-1.1 -2.2 L1.1 0 L-1.1 2.2" fill="none" stroke="#444" stroke-width="1.15"/></svg>
<div class="t " style="left:523.5px;top:113.7px;letter-spacing:-0.507px;">Recipes</div>
<svg style="left:619px;top:119px" width="1" height="1" viewBox="0 0 1 1"><path d="M-2.8 -1.4 L0 1.4 L2.8 -1.4" fill="none" stroke="#555" stroke-width="1.2"/></svg>
<svg style="left:640px;top:118.9px" width="1" height="1" viewBox="0 0 1 1"><path d="M0.3 -3.2 A3.2 3.2 0 1 1 -2.95 -1.3" fill="none" stroke="#555" stroke-width="1.1"/><path d="M-2.3 -3.6 H0.5 V-.9" fill="none" stroke="#555" stroke-width="1"/></svg>
<svg style="left:668px;top:118.2px" width="1" height="1" viewBox="0 0 1 1"><circle cx="1" cy="-1" r="2.6" fill="none" stroke="#8a8a8a" stroke-width=".8"/><path d="M-.9 .9 L-3.6 3.6" stroke="#8a8a8a" stroke-width=".9"/></svg>
<div class="t " style="left:681.7px;top:114.3px;letter-spacing:-0.471px;color:#6d6d6d">Search Recipes</div>
<div class="a" style="left:335.6px;top:233px;width:131.6px;height:15.7px;background:#d8d8d8;"></div>
<div class="t " style="left:364.0px;top:145.8px;letter-spacing:-0.412px;">Quick access</div>
<div class="t " style="left:364.0px;top:167.0px;letter-spacing:-0.247px;">OneDrive</div>
<div class="t " style="left:364.40000000000003px;top:188.6px;letter-spacing:-0.653px;">This PC</div>
<div class="t " style="left:369.90000000000003px;top:204.7px;letter-spacing:-0.235px;">3D Objects</div>
<div class="t " style="left:369.90000000000003px;top:220.8px;letter-spacing:-0.231px;">Desktop</div>
<div class="t " style="left:369.90000000000003px;top:236.9px;letter-spacing:-0.221px;">Documents</div>
<div class="t " style="left:369.90000000000003px;top:253.0px;letter-spacing:-0.284px;">Downloads</div>
<div class="t " style="left:369.90000000000003px;top:269.1px;letter-spacing:-0.247px;">Music</div>
<div class="t " style="left:369.90000000000003px;top:285.2px;letter-spacing:-0.331px;">Pictures</div>
<div class="t " style="left:369.90000000000003px;top:301.3px;letter-spacing:-0.172px;">Videos</div>
<svg style="left:354.4px;top:146.4px" width="8" height="8" viewBox="0 0 8 8"><polygon points="4.00,-0.50 5.15,2.62 8.47,2.75 5.85,4.80 6.76,8.00 4.00,6.15 1.24,8.00 2.15,4.80 -0.47,2.75 2.85,2.62" fill="#0f9af4"/></svg>
<svg style="left:351.6px;top:168.2px" width="11" height="7.3" viewBox="0 0 11 7.3"><path d="M2.6 7.3 A2.4 2.4 0 0 1 2.3 2.6 A3.3 3.3 0 0 1 8.3 2.4 A2.5 2.5 0 0 1 8.6 7.3 Z" fill="#1a7fd8"/><path d="M2.6 7.3 A2.4 2.4 0 0 1 2.3 2.6 A3.3 3.3 0 0 1 4.5 0.9 L6 7.3Z" fill="#2b98e8" opacity=".7"/></svg>
<svg style="left:352.1px;top:189.6px" width="10" height="7.4" viewBox="0 0 10 7.4"><polygon points="2.4,0 10,1.2 8.8,6.4 1.8,4.8" fill="#18a6f0"/><polygon points="2.4,0 5,0.4 4,5.3 1.8,4.8" fill="#4cc4f8"/><polygon points="0,6.2 1.9,4.9 8.6,6.4 6.6,7.4" fill="#c2c6cc"/></svg>
<svg style="left:357.9px;top:205.1px" width="9.4" height="8.3" viewBox="0 0 9.4 8.3"><polygon points="0,1.5 3.4,0 9.4,0.7 9.4,7 5.9,8.3 0,7.4" fill="#22bde8"/><polygon points="0,1.5 3.4,0 9.4,0.7 5.9,2.2" fill="#5adcf6"/><polygon points="5.9,2.2 9.4,0.7 9.4,7 5.9,8.3" fill="#1384cf"/><polygon points="0.7,2.4 5.2,2.9 5.2,7.3 0.7,6.7" fill="#e9fbff"/><rect x="1.6" y="4" width="2.6" height="1.4" fill="#35c6ea"/></svg>
<svg style="left:357.9px;top:221.9px" width="9.4" height="6.6" viewBox="0 0 9.4 6.6"><rect x="0" y="0" width="9.5" height="7.2" fill="#109af4"/><rect x="0" y="6" width="9.5" height="1.2" fill="#0e7fe0"/></svg>
<svg style="left:359.2px;top:236.8px" width="7" height="9.3" viewBox="0 0 7 9.3"><path d="M.3 .3 H4.34 L6.7 2.5110000000000006 V9.0 H.3Z" fill="#fbfdff" stroke="#93a3b6" stroke-width=".65"/><rect x="1.68" y="2.79" width="2.8000000000000003" height="2.418" fill="#3f9fe9"/><rect x="1.54" y="6.138000000000001" width="3.9200000000000004" height=".7" fill="#8aa0b8"/><rect x="1.54" y="7.440000000000001" width="3.9200000000000004" height=".6" fill="#a9b8c8"/></svg>
<svg style="left:358.6px;top:253.4px" width="8.2" height="8.4" viewBox="0 0 8.2 8.4"><path d="M2.5 0 H5.7 V3.7 H8.2 L4.1 8.4 L0 3.7 H2.5Z" fill="#1b92f2"/></svg>
<svg style="left:359.8px;top:268.9px" width="6.3" height="9.5" viewBox="0 0 6.3 9.5"><path d="M2.9 0 H4 C4.2 1.9 6.5 2.6 6.1 5.2 C5.7 3.7 4.4 3.4 4 3.2 V7.4 A2 1.9 0 1 1 2.9 5.7Z" fill="#1b92f2"/></svg>
<svg style="left:358.4px;top:286.8px" width="8.6" height="6.2" viewBox="0 0 8.6 6.2"><rect x=".2" y=".2" width="8.2" height="5.8" fill="#e4f2fb" stroke="#9aa6b2" stroke-width=".4"/><rect x=".7" y=".9" width="7.2" height="2.4" fill="#7cc4f0"/><rect x=".7" y="2.5" width="7.2" height="1" fill="#bfe3f7"/><path d="M.7 5.4 V3.4 L3.4 3 L7.9 4.6 V5.4Z" fill="#2e5a4c"/></svg>
<svg style="left:359.2px;top:301.2px" width="7" height="8.7" viewBox="0 0 7 8.7"><rect x="0" y="0" width="7" height="8.7" fill="#4a4f5c"/><rect x="1.3" y=".8" width="4.4" height="7.1" fill="#3f82d8"/><rect x="1.3" y="3" width="2.4" height="2.6" fill="#e8a23a"/><rect x="3.5" y="4.4" width="2.2" height="2" fill="#d8483a"/><rect x="1.3" y="5.8" width="4.4" height="2.1" fill="#2f62b8"/><path d="M.6 .6 V8.2 M6.4 .6 V8.2" stroke="#cfd3da" stroke-width=".5" stroke-dasharray=".7 .8"/></svg>
<div class="a" style="left:467.8px;top:130.6px;width:10.2px;height:182.8px;background:#f0f0f0;"></div>
<div class="a" style="left:467.8px;top:142.4px;width:10.2px;height:101.3px;background:#cacaca;"></div>
<svg style="left:472.9px;top:136.0px" width="1" height="1" viewBox="0 0 1 1"><path d="M-2.7 1.35 L0 -1.35 L2.7 1.35" fill="none" stroke="#333" stroke-width="1.5"/></svg>
<svg style="left:472.9px;top:308.2px" width="1" height="1" viewBox="0 0 1 1"><path d="M-2.7 -1.35 L0 1.35 L2.7 -1.35" fill="none" stroke="#333" stroke-width="1.5"/></svg>
<div class="a" style="left:578px;top:135.2px;width:70.4px;height:89.2px;background:#cce8ff;"></div>
<svg style="left:504.6px;top:140.6px" width="42.2" height="56.2" viewBox="0 0 42.2 56.2"><path d="M.5 .5 H29.6 L41.7 12.6 V55.7 H.5Z" fill="#f7f7f7" stroke="#858585" stroke-width="1.05"/><path d="M29.6 .5 V12.6 H41.7Z" fill="#fdfdfd" stroke="#858585" stroke-width="1"/><rect x="23.4" y="21.2" width="14.8" height="1.5" fill="#41a5ee"/><rect x="23.4" y="25.2" width="14.8" height="1.5" fill="#2b7cd3"/><rect x="23.4" y="29.2" width="14.8" height="1.5" fill="#185abd"/><rect x="23.4" y="33.2" width="14.8" height="1.5" fill="#103f91"/><rect x="-7" y="13.6" width="28.2" height="28" rx="2" fill="#175abc"/><text x="7.5" y="35.4" text-anchor="middle" font-family="Liberation Sans,sans-serif" font-weight="bold" font-size="21" fill="#fff" textLength="19" lengthAdjust="spacingAndGlyphs">W</text></svg>
<div class="lab" style="left:486.0px;top:201.65px;width:80px"><span style="letter-spacing:-0.188px;margin-right:-0.188px">Aunt Cathy's</span><br><span style="letter-spacing:-0.389px;margin-right:-0.389px">Carrot Cake</span></div>
<svg style="left:592.0px;top:140.6px" width="42.2" height="56.2" viewBox="0 0 42.2 56.2"><path d="M.5 .5 H29.6 L41.7 12.6 V55.7 H.5Z" fill="#f7f7f7" stroke="#858585" stroke-width="1.05"/><path d="M29.6 .5 V12.6 H41.7Z" fill="#fdfdfd" stroke="#858585" stroke-width="1"/><rect x="23.4" y="21.2" width="14.8" height="1.5" fill="#41a5ee"/><rect x="23.4" y="25.2" width="14.8" height="1.5" fill="#2b7cd3"/><rect x="23.4" y="29.2" width="14.8" height="1.5" fill="#185abd"/><rect x="23.4" y="33.2" width="14.8" height="1.5" fill="#103f91"/><rect x="-7" y="13.6" width="28.2" height="28" rx="2" fill="#175abc"/><text x="7.5" y="35.4" text-anchor="middle" font-family="Liberation Sans,sans-serif" font-weight="bold" font-size="21" fill="#fff" textLength="19" lengthAdjust="spacingAndGlyphs">W</text></svg>
<div class="lab" style="left:573.4px;top:201.65px;width:80px"><span style="letter-spacing:-0.325px;margin-right:-0.325px">Chocolate</span><br><span style="letter-spacing:-0.48px;margin-right:-0.48px">Cheesecake</span></div>
<svg style="left:679.4px;top:140.6px" width="42.2" height="56.2" viewBox="0 0 42.2 56.2"><path d="M.5 .5 H29.6 L41.7 12.6 V55.7 H.5Z" fill="#f7f7f7" stroke="#858585" stroke-width="1.05"/><path d="M29.6 .5 V12.6 H41.7Z" fill="#fdfdfd" stroke="#858585" stroke-width="1"/><rect x="23.4" y="21.2" width="14.8" height="1.5" fill="#41a5ee"/><rect x="23.4" y="25.2" width="14.8" height="1.5" fill="#2b7cd3"/><rect x="23.4" y="29.2" width="14.8" height="1.5" fill="#185abd"/><rect x="23.4" y="33.2" width="14.8" height="1.5" fill="#103f91"/><rect x="-7" y="13.6" width="28.2" height="28" rx="2" fill="#175abc"/><text x="7.5" y="35.4" text-anchor="middle" font-family="Liberation Sans,sans-serif" font-weight="bold" font-size="21" fill="#fff" textLength="19" lengthAdjust="spacingAndGlyphs">W</text></svg>
<div class="lab" style="left:660.8px;top:201.65px;width:80px"><span style="letter-spacing:-0.385px;margin-right:-0.385px">Classic Fruitcake</span></div>
<svg style="left:766.8px;top:140.6px" width="42.2" height="56.2" viewBox="0 0 42.2 56.2"><path d="M.5 .5 H29.6 L41.7 12.6 V55.7 H.5Z" fill="#f7f7f7" stroke="#858585" stroke-width="1.05"/><path d="M29.6 .5 V12.6 H41.7Z" fill="#fdfdfd" stroke="#858585" stroke-width="1"/><rect x="23.4" y="21.2" width="14.8" height="1.5" fill="#41a5ee"/><rect x="23.4" y="25.2" width="14.8" height="1.5" fill="#2b7cd3"/><rect x="23.4" y="29.2" width="14.8" height="1.5" fill="#185abd"/><rect x="23.4" y="33.2" width="14.8" height="1.5" fill="#103f91"/><rect x="-7" y="13.6" width="28.2" height="28" rx="2" fill="#175abc"/><text x="7.5" y="35.4" text-anchor="middle" font-family="Liberation Sans,sans-serif" font-weight="bold" font-size="21" fill="#fff" textLength="19" lengthAdjust="spacingAndGlyphs">W</text></svg>
<div class="lab" style="left:748.2px;top:201.65px;width:80px"><span style="letter-spacing:-0.536px;margin-right:-0.536px">Easy Cake Pops</span></div>
<svg style="left:504.6px;top:231.2px" width="42.2" height="56.2" viewBox="0 0 42.2 56.2"><path d="M.5 .5 H29.6 L41.7 12.6 V55.7 H.5Z" fill="#f7f7f7" stroke="#858585" stroke-width="1.05"/><path d="M29.6 .5 V12.6 H41.7Z" fill="#fdfdfd" stroke="#858585" stroke-width="1"/><rect x="23.4" y="21.2" width="14.8" height="1.5" fill="#41a5ee"/><rect x="23.4" y="25.2" width="14.8" height="1.5" fill="#2b7cd3"/><rect x="23.4" y="29.2" width="14.8" height="1.5" fill="#185abd"/><rect x="23.4" y="33.2" width="14.8" height="1.5" fill="#103f91"/><rect x="-7" y="13.6" width="28.2" height="28" rx="2" fill="#175abc"/><text x="7.5" y="35.4" text-anchor="middle" font-family="Liberation Sans,sans-serif" font-weight="bold" font-size="21" fill="#fff" textLength="19" lengthAdjust="spacingAndGlyphs">W</text></svg>
<div class="lab" style="left:486.0px;top:292.25px;width:80px"><span style="letter-spacing:-0.407px;margin-right:-0.407px">German</span><br><span style="letter-spacing:-0.255px;margin-right:-0.255px">Chocolate Cake</span></div>
<svg style="left:592.0px;top:231.2px" width="42.2" height="56.2" viewBox="0 0 42.2 56.2"><path d="M.5 .5 H29.6 L41.7 12.6 V55.7 H.5Z" fill="#f7f7f7" stroke="#858585" stroke-width="1.05"/><path d="M29.6 .5 V12.6 H41.7Z" fill="#fdfdfd" stroke="#858585" stroke-width="1"/><rect x="23.4" y="21.2" width="14.8" height="1.5" fill="#41a5ee"/><rect x="23.4" y="25.2" width="14.8" height="1.5" fill="#2b7cd3"/><rect x="23.4" y="29.2" width="14.8" height="1.5" fill="#185abd"/><rect x="23.4" y="33.2" width="14.8" height="1.5" fill="#103f91"/><rect x="-7" y="13.6" width="28.2" height="28" rx="2" fill="#175abc"/><text x="7.5" y="35.4" text-anchor="middle" font-family="Liberation Sans,sans-serif" font-weight="bold" font-size="21" fill="#fff" textLength="19" lengthAdjust="spacingAndGlyphs">W</text></svg>
<div class="lab" style="left:573.4px;top:292.25px;width:80px"><span style="letter-spacing:-0.308px;margin-right:-0.308px">Jeremy's Low-Fat</span><br><span style="letter-spacing:-0.48px;margin-right:-0.48px">Cheesecake</span></div>
<svg style="left:679.4px;top:231.2px" width="42.2" height="56.2" viewBox="0 0 42.2 56.2"><path d="M.5 .5 H29.6 L41.7 12.6 V55.7 H.5Z" fill="#f7f7f7" stroke="#858585" stroke-width="1.05"/><path d="M29.6 .5 V12.6 H41.7Z" fill="#fdfdfd" stroke="#858585" stroke-width="1"/><rect x="23.4" y="21.2" width="14.8" height="1.5" fill="#41a5ee"/><rect x="23.4" y="25.2" width="14.8" height="1.5" fill="#2b7cd3"/><rect x="23.4" y="29.2" width="14.8" height="1.5" fill="#185abd"/><rect x="23.4" y="33.2" width="14.8" height="1.5" fill="#103f91"/><rect x="-7" y="13.6" width="28.2" height="28" rx="2" fill="#175abc"/><text x="7.5" y="35.4" text-anchor="middle" font-family="Liberation Sans,sans-serif" font-weight="bold" font-size="21" fill="#fff" textLength="19" lengthAdjust="spacingAndGlyphs">W</text></svg>
<div class="lab" style="left:660.8px;top:292.25px;width:80px"><span style="letter-spacing:-0.276px;margin-right:-0.276px">Nana's Pound</span><br><span style="letter-spacing:-0.653px;margin-right:-0.653px">Cake</span></div>
<svg style="left:766.8px;top:231.2px" width="42.2" height="56.2" viewBox="0 0 42.2 56.2"><path d="M.5 .5 H29.6 L41.7 12.6 V55.7 H.5Z" fill="#f7f7f7" stroke="#858585" stroke-width="1.05"/><path d="M29.6 .5 V12.6 H41.7Z" fill="#fdfdfd" stroke="#858585" stroke-width="1"/><rect x="23.4" y="21.2" width="14.8" height="1.5" fill="#41a5ee"/><rect x="23.4" y="25.2" width="14.8" height="1.5" fill="#2b7cd3"/><rect x="23.4" y="29.2" width="14.8" height="1.5" fill="#185abd"/><rect x="23.4" y="33.2" width="14.8" height="1.5" fill="#103f91"/><rect x="-7" y="13.6" width="28.2" height="28" rx="2" fill="#175abc"/><text x="7.5" y="35.4" text-anchor="middle" font-family="Liberation Sans,sans-serif" font-weight="bold" font-size="21" fill="#fff" textLength="19" lengthAdjust="spacingAndGlyphs">W</text></svg>
<div class="lab" style="left:748.2px;top:292.25px;width:80px"><span style="letter-spacing:-0.216px;margin-right:-0.216px">Triple Chocolate</span><br><span style="letter-spacing:-0.653px;margin-right:-0.653px">Cake</span></div>
<div class="a" style="left:840.1px;top:130.6px;width:9px;height:183.0px;background:#f0f0f0;"></div>
<div class="a" style="left:840.1px;top:143.2px;width:9px;height:106.8px;background:#a8a8a8;"></div>
<svg style="left:844.6px;top:136.0px" width="1" height="1" viewBox="0 0 1 1"><path d="M-2.7 1.35 L0 -1.35 L2.7 1.35" fill="none" stroke="#333" stroke-width="1.5"/></svg>
<svg style="left:844.6px;top:308.4px" width="1" height="1" viewBox="0 0 1 1"><path d="M-2.7 -1.35 L0 1.35 L2.7 -1.35" fill="none" stroke="#333" stroke-width="1.5"/></svg>
<div class="a" style="left:335px;top:313.4px;width:520px;height:17px;background:#fff;"></div>
<div class="t st" style="left:344.8px;top:317.3px;letter-spacing:-0.196px;">9 items</div>
<div class="t st" style="left:385.9px;top:317.3px;letter-spacing:-0.193px;">1 item selected</div>
<div class="t st" style="left:445.3px;top:317.3px;letter-spacing:-0.481px;">11.4 KB</div>
<svg style="left:821.1px;top:317.4px" width="9.4" height="8.4" viewBox="0 0 9.4 8.4"><rect x="0" y="0.0" width="1.6" height="1.4" fill="#c4c7cc"/><rect x="2.6" y="0.0" width="6.6" height="1.4" fill="#d9dbde"/><rect x="0" y="2.3" width="1.6" height="1.4" fill="#c4c7cc"/><rect x="2.6" y="2.3" width="6.6" height="1.4" fill="#d9dbde"/><rect x="0" y="4.6" width="1.6" height="1.4" fill="#c4c7cc"/><rect x="2.6" y="4.6" width="6.6" height="1.4" fill="#d9dbde"/><rect x="0" y="6.8999999999999995" width="1.6" height="1.4" fill="#c4c7cc"/><rect x="2.6" y="6.8999999999999995" width="6.6" height="1.4" fill="#d9dbde"/></svg>
<div class="a" style="left:833px;top:313.8px;width:15px;height:15.9px;background:#c3e2f8;border:1px solid #a3d0f1"></div>
<svg style="left:836.4px;top:319.2px" width="9" height="6.6" viewBox="0 0 9 6.6"><rect x="0" y="0" width="9" height="6.6" fill="#e8f3fb"/><rect x=".4" y=".5" width="8.2" height="1.1" fill="#3f8fe0"/><path d="M.6 5.8 L.6 2.4 L8.4 5.2 L8.4 5.8Z" fill="#24503f"/><path d="M.6 5.8 H8.4 V6.4 H.6Z" fill="#9ab"/></svg>
</div></div>
<svg style="left:16.4px;top:2.9px" width="16.6" height="17.9" viewBox="0 0 16.6 17.9"><defs><linearGradient id="binl" x1="0" y1="0" x2="1" y2="0"><stop offset="0" stop-color="#dfeaf1"/><stop offset="1" stop-color="#f4f8fa"/></linearGradient><linearGradient id="binr" x1="0" y1="0" x2="1" y2="0"><stop offset="0" stop-color="#e6e9ea"/><stop offset="1" stop-color="#c9d1d6"/></linearGradient></defs><path d="M1.6 .9 L4.2 0 L7 .8 L9.6 .1 L12.6 .9 L15 1.1 L16 2.4 L8.6 3.8 L.4 2.4Z" fill="#f7f7f5" opacity=".95"/><path d="M.2 1.9 L8.6 3.3 L8.8 17.9 L2.2 16.1Z" fill="url(#binl)" opacity=".93"/><path d="M8.6 3.3 L16.4 1.9 L14.5 16.1 L8.8 17.9Z" fill="url(#binr)" opacity=".93"/><path d="M3.2 9.2 L4.6 7.1 L6 8.2 M6.9 9.4 L7.1 11.9 L5.3 12.1 M4.2 12.2 L2.8 10.9 L3.2 9.8" fill="none" stroke="#1f78d4" stroke-width="1.2"/></svg>
<div class="dl" style="left:-10.2px;top:25.5px">Recycle Bin</div>
<svg style="left:24.75px;top:69px" width="1.04" height="1.04" viewBox="0 0 1 1"><circle cx="0" cy="0" r="9.5" fill="#fff"/><path d="M0 0 L-8.23 -4.75 A9.5 9.5 0 0 1 8.23 -4.75 Z" fill="#e33b2e"/><path d="M0 0 L8.23 -4.75 A9.5 9.5 0 0 1 0 9.5 Z" fill="#fbc116"/><path d="M0 0 L0 9.5 A9.5 9.5 0 0 1 -8.23 -4.75 Z" fill="#2da94f"/><path d="M0 -4.4 H8.4 A9.5 9.5 0 0 0 -8.23 -4.75 L-3.8 2.2Z" fill="#e33b2e"/><path d="M3.8 2.2 L-.4 9.49 A9.5 9.5 0 0 0 8.4 -4.4 L0 -4.4Z" fill="#fbc116"/><path d="M-3.8 2.2 L-8.23 -4.75 A9.5 9.5 0 0 0 -.4 9.49 L3.8 2.2Z" fill="#2da94f"/><circle cx="0" cy="0" r="4.4" fill="#fff"/><circle cx="0" cy="0" r="3.5" fill="#3f86f0"/></svg>
<div class="a" style="left:14.1px;top:74.6px;width:4.8px;height:4.8px;background:#fdfdfd;box-shadow:0 0 .5px rgba(0,0,0,.5)"></div>
<svg style="left:14.7px;top:75.2px" width="3.6" height="3.6" viewBox="0 0 3.6 3.6"><path d="M.5 3.4 C.5 1.8 1.3 1.2 2.6 1.2 M1.7 .1 L3 1.2 L1.7 2.4" fill="none" stroke="#1b5fc4" stroke-width=".85"/></svg>
<div class="dl" style="left:-10.6px;top:81.9px">Google<br>Chrome</div>
<svg style="left:24.6px;top:125.8px" width="1" height="1" viewBox="0 0 1 1"><defs><linearGradient id="de1" x1="0" y1="0" x2="1" y2="0"><stop offset="0" stop-color="#2a8fd8"/><stop offset=".35" stop-color="#2fc0c8"/><stop offset=".7" stop-color="#3fd66a"/><stop offset="1" stop-color="#2fd080"/></linearGradient><linearGradient id="de2" x1="0" y1="0" x2="1" y2="1"><stop offset="0" stop-color="#1f7fd0"/><stop offset=".6" stop-color="#0f4f9c"/><stop offset="1" stop-color="#0b3f86"/></linearGradient></defs><path d="M-10.2 1.5 C-9.8 -3 -6.6 -5.2 -2.6 -5 C0.6 -4.8 2.6 -2.6 2.4 -0.4 C1 -2.2 -1.8 -2.2 -3.4 -0.2 C-5.6 2.8 -3.4 7.8 2 8.4 C5 8.7 7.6 7.6 9.2 5 C8 9 3.6 10.6 0 10.3 C-5.8 10 -10.4 6 -10.2 1.5Z" fill="url(#de2)"/><path d="M-10.2 1.5 A10.3 10.3 0 0 1 10.2 -1.2 C10.6 2.5 8.6 5.4 4.8 5.6 C3 5.7 1.8 5 1.7 4 C1.6 3.2 2.6 2.2 2.5 0.2 C2.4 -3 -0.2 -5.4 -3.4 -5.2 C-7 -5 -9.8 -2.2 -10.2 1.5Z" fill="url(#de1)"/></svg>
<div class="a" style="left:14.1px;top:131.6px;width:4.8px;height:4.8px;background:#fdfdfd;box-shadow:0 0 .5px rgba(0,0,0,.5)"></div>
<svg style="left:14.7px;top:132.2px" width="3.6" height="3.6" viewBox="0 0 3.6 3.6"><path d="M.5 3.4 C.5 1.8 1.3 1.2 2.6 1.2 M1.7 .1 L3 1.2 L1.7 2.4" fill="none" stroke="#1b5fc4" stroke-width=".85"/></svg>
<div class="dl" style="left:-10.4px;top:138.6px">Microsoft<br>Edge</div>
<svg style="left:24.6px;top:182.9px" width="1" height="1" viewBox="0 0 1 1"><defs><radialGradient id="ff1" cx=".62" cy=".12" r="1"><stop offset="0" stop-color="#fff04a"/><stop offset=".3" stop-color="#ffb01e"/><stop offset=".55" stop-color="#ff6a2a"/><stop offset=".8" stop-color="#ff2f5e"/><stop offset="1" stop-color="#e0189a"/></radialGradient></defs><path d="M-9.4 1 C-9.8 -3 -8 -5.6 -6.6 -6.8 C-6.4 -5.4 -5.6 -4.6 -5 -4.2 C-4 -6.6 -1.6 -6.6 0.6 -7.4 C1.4 -8.2 2 -9.4 2.6 -10.4 C3.6 -8.6 5.6 -7.6 6.4 -6.4 C8.8 -4.4 9.8 -2 9.5 .8 A9.5 9.5 0 0 1 -9.4 1Z" fill="url(#ff1)"/><circle cx=".2" cy="-.2" r="3.9" fill="#7a3fe0"/><circle cx="-.4" cy="-.8" r="2.4" fill="#9a5af4" opacity=".8"/><path d="M-9.4 1 A9.5 9.5 0 0 0 9.2 3 C6.6 7.2 1 7.6 -2.4 5 C-5.2 4.6 -6.6 2.2 -5.8 -.8 C-4.4 -2.4 -2.4 -2.6 -1.2 -2.4 C-3 -4 -6 -3.6 -7 -1.4 C-8.2 -1 -9 -.2 -9.4 1Z" fill="#ff4a36" opacity=".9"/><path d="M-8.6 4.6 A9.5 9.5 0 0 0 8.4 5 C5 9 -2 9 -5.6 5.4Z" fill="#f0209a" opacity=".75"/></svg>
<div class="a" style="left:14.1px;top:188.5px;width:4.8px;height:4.8px;background:#fdfdfd;box-shadow:0 0 .5px rgba(0,0,0,.5)"></div>
<svg style="left:14.7px;top:189.1px" width="3.6" height="3.6" viewBox="0 0 3.6 3.6"><path d="M.5 3.4 C.5 1.8 1.3 1.2 2.6 1.2 M1.7 .1 L3 1.2 L1.7 2.4" fill="none" stroke="#1b5fc4" stroke-width=".85"/></svg>
<div class="dl" style="left:-10.6px;top:195.6px">Firefox</div>
<div class="a" style="left:0;top:529.6px;width:853px;height:26px;background:linear-gradient(90deg,#18333f 0%,#18323f 60%,#14293f 76%,#12243e 100%)"></div>
<svg style="left:10px;top:537.2px" width="11.2" height="11.2" viewBox="0 0 11.4 11.4"><path d="M0 1.6 L4.8 .9 V5.4 H0Z M5.5 .8 L11.4 0 V5.4 H5.5Z M0 6.1 H4.8 V10.6 L0 9.9Z M5.5 6.1 H11.4 V11.4 L5.5 10.6Z" fill="#fff"/></svg>
<div class="a" style="left:32px;top:530.4px;width:230px;height:25px;background:#f2f2f2;"></div>
<svg style="left:45.2px;top:542.4px" width="1" height="1" viewBox="0 0 1 1"><circle cx="1.5" cy="-1.4" r="3.4" fill="none" stroke="#333" stroke-width="1.2"/><path d="M-1 1.1 L-4.8 5.2" stroke="#333" stroke-width="1.3"/></svg>
<div class="t" style="left:59px;top:537.5px;font-size:10.4px;line-height:13px;color:#3c3c3c;letter-spacing:-0.275px">Type here to search</div>
<svg style="left:278.4px;top:543.2px" width="1" height="1" viewBox="0 0 1 1"><circle cx="0" cy="0" r="4.4" fill="none" stroke="#fff" stroke-width="1.4"/></svg>
<svg style="left:305.2px;top:538px" width="11" height="10.6" viewBox="0 0 10 9.6"><rect x="1.4" y="2.6" width="5.2" height="4.4" fill="none" stroke="#fff" stroke-width=".9"/><path d="M.9 .5 H7 M.9 9.1 H7" stroke="#fff" stroke-width=".9"/><path d="M9 .2 V2 M9 3.4 V6.2 M9 7.6 V9.4" stroke="#fff" stroke-width="1.1"/></svg>
<div class="a" style="left:329px;top:529.8px;width:29.4px;height:26px;background:#3e5762;"></div>
<svg style="left:337.5px;top:537px" width="14.8" height="11.8" viewBox="0 0 14.6 11.6"><path d="M0 1 H5 L6.2 2.2 H14.6 V11.6 H0Z" fill="#f3b928"/><path d="M0 3.6 H14.6 V11.6 H0Z" fill="#ffd761"/><rect x="3.6" y="6.4" width="7.4" height="5.2" fill="#2f86d8"/><rect x="5.2" y="8.6" width="4.2" height="3" fill="#ffd761"/></svg>
<svg style="left:378px;top:543.3px" width="0.87" height="0.87" viewBox="0 0 1 1"><defs><linearGradient id="te1" x1="0" y1="0" x2="1" y2="0"><stop offset="0" stop-color="#2a8fd8"/><stop offset=".35" stop-color="#2fc0c8"/><stop offset=".7" stop-color="#3fd66a"/><stop offset="1" stop-color="#2fd080"/></linearGradient><linearGradient id="te2" x1="0" y1="0" x2="1" y2="1"><stop offset="0" stop-color="#1f7fd0"/><stop offset=".6" stop-color="#0f4f9c"/><stop offset="1" stop-color="#0b3f86"/></linearGradient></defs><path d="M-10.2 1.5 C-9.8 -3 -6.6 -5.2 -2.6 -5 C0.6 -4.8 2.6 -2.6 2.4 -0.4 C1 -2.2 -1.8 -2.2 -3.4 -0.2 C-5.6 2.8 -3.4 7.8 2 8.4 C5 8.7 7.6 7.6 9.2 5 C8 9 3.6 10.6 0 10.3 C-5.8 10 -10.4 6 -10.2 1.5Z" fill="url(#te2)"/><path d="M-10.2 1.5 A10.3 10.3 0 0 1 10.2 -1.2 C10.6 2.5 8.6 5.4 4.8 5.6 C3 5.7 1.8 5 1.7 4 C1.6 3.2 2.6 2.2 2.5 0.2 C2.4 -3 -0.2 -5.4 -3.4 -5.2 C-7 -5 -9.8 -2.2 -10.2 1.5Z" fill="url(#te1)"/></svg>
<svg style="left:402.4px;top:535.4px" width="16" height="15" viewBox="0 0 13.4 15"><path d="M4 3.6 V2.4 A2.7 2.4 0 0 1 9.4 2.4 V3.6" fill="none" stroke="#fff" stroke-width=".9"/><path d="M0 3.6 H13.4 V15 H0Z" fill="#fff"/><rect x="3.8" y="6.6" width="2.6" height="2.6" fill="#f25022"/><rect x="7" y="6.6" width="2.6" height="2.6" fill="#7fba00"/><rect x="3.8" y="9.8" width="2.6" height="2.6" fill="#00a4ef"/><rect x="7" y="9.8" width="2.6" height="2.6" fill="#ffb900"/></svg>
<svg style="left:435px;top:535.6px" width="17.4" height="14" viewBox="0 0 17.6 13.4"><path d="M0 4.6 L8.8 0 L17.6 4.6 V13.4 H0Z" fill="#1b8fe8"/><path d="M0 4.6 L8.8 9.4 L17.6 4.6 V13.4 H0Z" fill="#35b3f5"/><path d="M0 13.4 L8.8 7.6 L17.6 13.4Z" fill="#1d9bf0"/></svg>
<svg style="left:734.1px;top:543.4px" width="1" height="1" viewBox="0 0 1 1"><path d="M-3.8 1.9 L0 -1.9 L3.8 1.9" fill="none" stroke="#fff" stroke-width="1.1"/></svg>
<svg style="left:745px;top:538.2px" width="11" height="10.6" viewBox="0 0 11 10.6"><rect x="2.6" y=".5" width="8" height="6" fill="none" stroke="#fff" stroke-width=".9"/><path d="M4.6 9.8 H9.4 M7 6.6 V9.8" stroke="#fff" stroke-width=".9"/><rect x=".4" y="3.6" width="2.8" height="5.4" fill="#13263f" stroke="#fff" stroke-width=".8"/></svg>
<svg style="left:760.4px;top:538.6px" width="12" height="9.6" viewBox="0 0 12 9.6"><path d="M.5 3.2 H2.4 L5 .8 V8.8 L2.4 6.4 H.5Z" fill="none" stroke="#fff" stroke-width=".8"/><path d="M6.6 3 A2.6 2.6 0 0 1 6.6 6.6" fill="none" stroke="#fff" stroke-width=".7"/><path d="M8 1.6 A4.4 4.4 0 0 1 8 8" fill="none" stroke="#ccd" stroke-width=".6" opacity=".7"/><path d="M9.4 .4 A6 6 0 0 1 9.4 9.2" fill="none" stroke="#ccd" stroke-width=".6" opacity=".5"/></svg>
<div class="t" style="left:766.7px;top:531.7px;width:60px;text-align:center;color:#fff;font-size:8px;line-height:11.9px;text-shadow:none;letter-spacing:-.05px">9:58 AM<br>3/24/2021</div>
<svg style="left:827.4px;top:537.6px" width="11.6" height="11.4" viewBox="0 0 11.6 11.4"><path d="M.5 .5 H11.1 V8.4 H7.4 L5.8 10.4 L4.2 8.4 H.5Z" fill="none" stroke="#fff" stroke-width=".9"/></svg></body></html>
